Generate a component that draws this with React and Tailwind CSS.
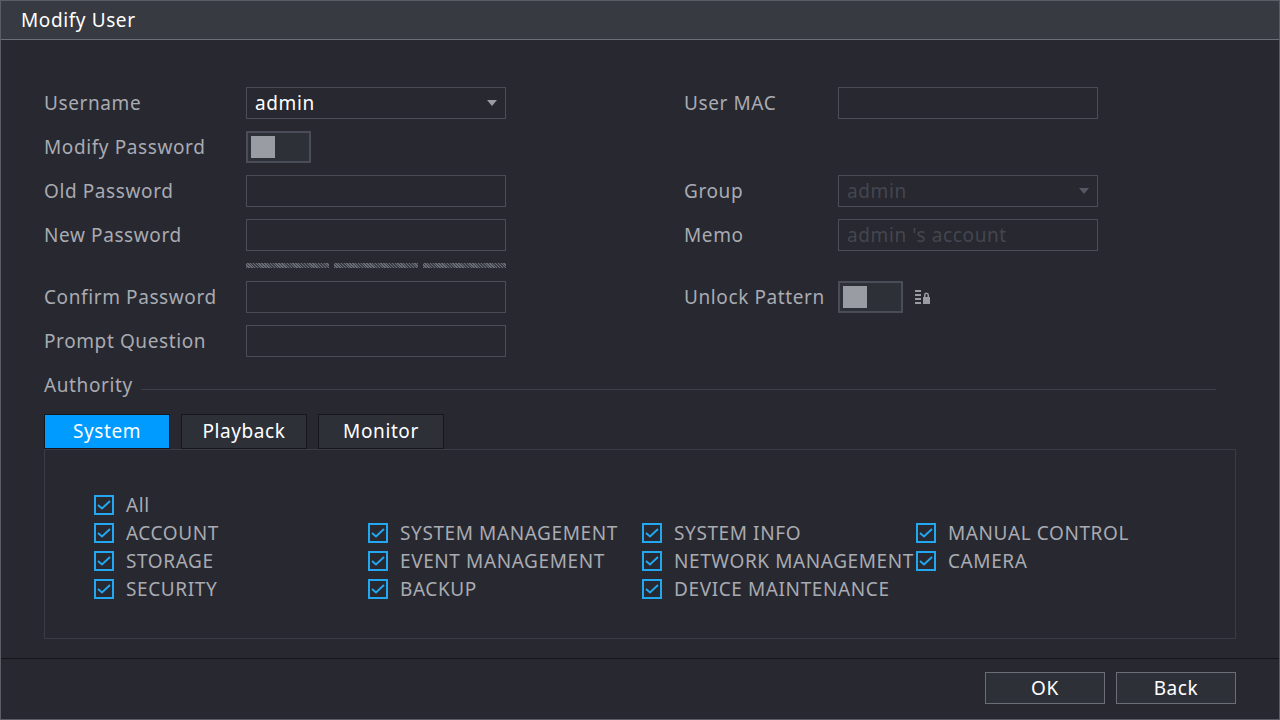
const font = { fontFamily: '"Noto Sans", "Open Sans", sans-serif', letterSpacing: '0.6px' };

const Input = ({ value, dim, arrow }) => (
  <div className="relative h-8 w-[260px] border border-[#4a4d57] bg-[#272830] flex items-center px-2">
    <span className={dim ? 'text-[#44464f] text-[19px]' : 'text-white text-[19px]'}>{value}</span>
    {arrow && (
      <span className={`absolute right-2 top-3 w-0 h-0 border-l-[5px] border-r-[5px] border-t-[6px] border-l-transparent border-r-transparent ${dim ? 'border-t-[#555862]' : 'border-t-[#9a9ca3]'}`} />
    )}
  </div>
);

const Toggle = () => (
  <div className="h-8 w-[65px] border-2 border-[#4a4d57] bg-[#2e3038] p-[3px] flex">
    <div className="w-6 h-full bg-[#9a9ca3]" />
  </div>
);

const Label = ({ children }) => (
  <div className="h-8 flex items-center text-[19px] text-[#a9abb2]">{children}</div>
);

const Check = ({ label }) => (
  <div className="flex items-center gap-3 h-7">
    <div className="w-5 h-5 border-2 border-[#23a7f0] flex items-center justify-center">
      <svg width="14" height="10" viewBox="0 0 14 10"><path d="M1 5 L5 8.5 L13 1" stroke="#23a7f0" strokeWidth="2" fill="none" /></svg>
    </div>
    <span className="text-[19px] text-[#a9abb2] whitespace-nowrap">{label}</span>
  </div>
);

export default function App() {
  const cols = [
    ['ACCOUNT', 'STORAGE', 'SECURITY'],
    ['SYSTEM MANAGEMENT', 'EVENT MANAGEMENT', 'BACKUP'],
    ['SYSTEM INFO', 'NETWORK MANAGEMENT', 'DEVICE MAINTENANCE'],
    ['MANUAL CONTROL', 'CAMERA'],
  ];
  return (
    <div style={font} className="w-[1280px] h-[720px] bg-[#272830] border border-[#5a5d66] flex flex-col overflow-hidden">
      <div className="h-[39px] bg-[#383a42] border-b border-[#6b6e76] flex items-center px-5 text-[19px] text-white shrink-0">Modify User</div>
      <div className="flex-1 px-[43px] pt-[47px]">
        <div className="grid grid-cols-[202px_260px_178px_154px_260px] grid-rows-[32px_32px_32px_32px_6px_32px_32px] gap-y-3">
          <Label>Username</Label><Input value="admin" arrow /><div /><Label>User MAC</Label><Input />
          <Label>Modify Password</Label><Toggle /><div /><div /><div />
          <Label>Old Password</Label><Input /><div /><Label>Group</Label><Input value="admin" dim arrow />
          <Label>New Password</Label><Input /><div /><Label>Memo</Label><Input value="admin 's account" dim />
          <div /><div className="flex gap-[5px] h-[5px]">
            <div className="flex-1 bg-[repeating-linear-gradient(45deg,#6b6e76_0_1px,#3a3c44_1px_2px)]" />
            <div className="flex-1 bg-[repeating-linear-gradient(45deg,#6b6e76_0_1px,#3a3c44_1px_2px)]" />
            <div className="flex-1 bg-[repeating-linear-gradient(45deg,#6b6e76_0_1px,#3a3c44_1px_2px)]" />
          </div><div /><div /><div />
          <Label>Confirm Password</Label><Input /><div /><Label>Unlock Pattern</Label>
          <div className="flex items-center gap-3"><Toggle />
            <svg width="16" height="14" viewBox="0 0 16 14" fill="#9a9ca3"><rect x="0" y="0" width="6" height="2"/><rect x="0" y="4" width="6" height="2"/><rect x="0" y="8" width="6" height="2"/><rect x="0" y="12" width="6" height="2"/><path d="M9 7 V5 a2.5 2.5 0 0 1 5 0 V7 h1 v7 h-7 v-7 z M10.5 7 h2 V5 a1 1 0 0 0 -2 0 z"/></svg>
          </div>
          <Label>Prompt Question</Label><Input /><div /><div /><div />
        </div>
        <div className="flex items-center gap-2 mt-3 h-8">
          <span className="text-[19px] text-[#a9abb2]">Authority</span>
          <div className="flex-1 h-px bg-[#3e4049] mt-2 mr-5" />
        </div>
        <div className="flex gap-[11px] mt-[13px]">
          <div className="w-[126px] h-[35px] bg-[#009bff] border border-[#13161c] flex items-center justify-center text-[19px] text-white">System</div>
          <div className="w-[126px] h-[35px] bg-[#2e3038] border border-[#15171c] flex items-center justify-center text-[19px] text-white">Playback</div>
          <div className="w-[126px] h-[35px] bg-[#2e3038] border border-[#15171c] flex items-center justify-center text-[19px] text-white">Monitor</div>
        </div>
        <div className="h-[190px] border border-[#3a3c45] pl-[49px] pt-[41px]">
          <Check label="All" />
          <div className="flex">
            {cols.map((c, i) => (
              <div key={i} className="w-[274px] flex flex-col">
                {c.map(l => <Check key={l} label={l} />)}
              </div>
            ))}
          </div>
        </div>
      </div>
      <div className="h-[61px] border-t border-[#14161b] flex justify-end items-start gap-[11px] pt-[13px] pr-[43px] shrink-0">
        <div className="w-[120px] h-8 border border-[#6b6e76] bg-[#2e3038] flex items-center justify-center text-[19px] text-white">OK</div>
        <div className="w-[120px] h-8 border border-[#6b6e76] bg-[#2e3038] flex items-center justify-center text-[19px] text-white">Back</div>
      </div>
    </div>
  );
}
